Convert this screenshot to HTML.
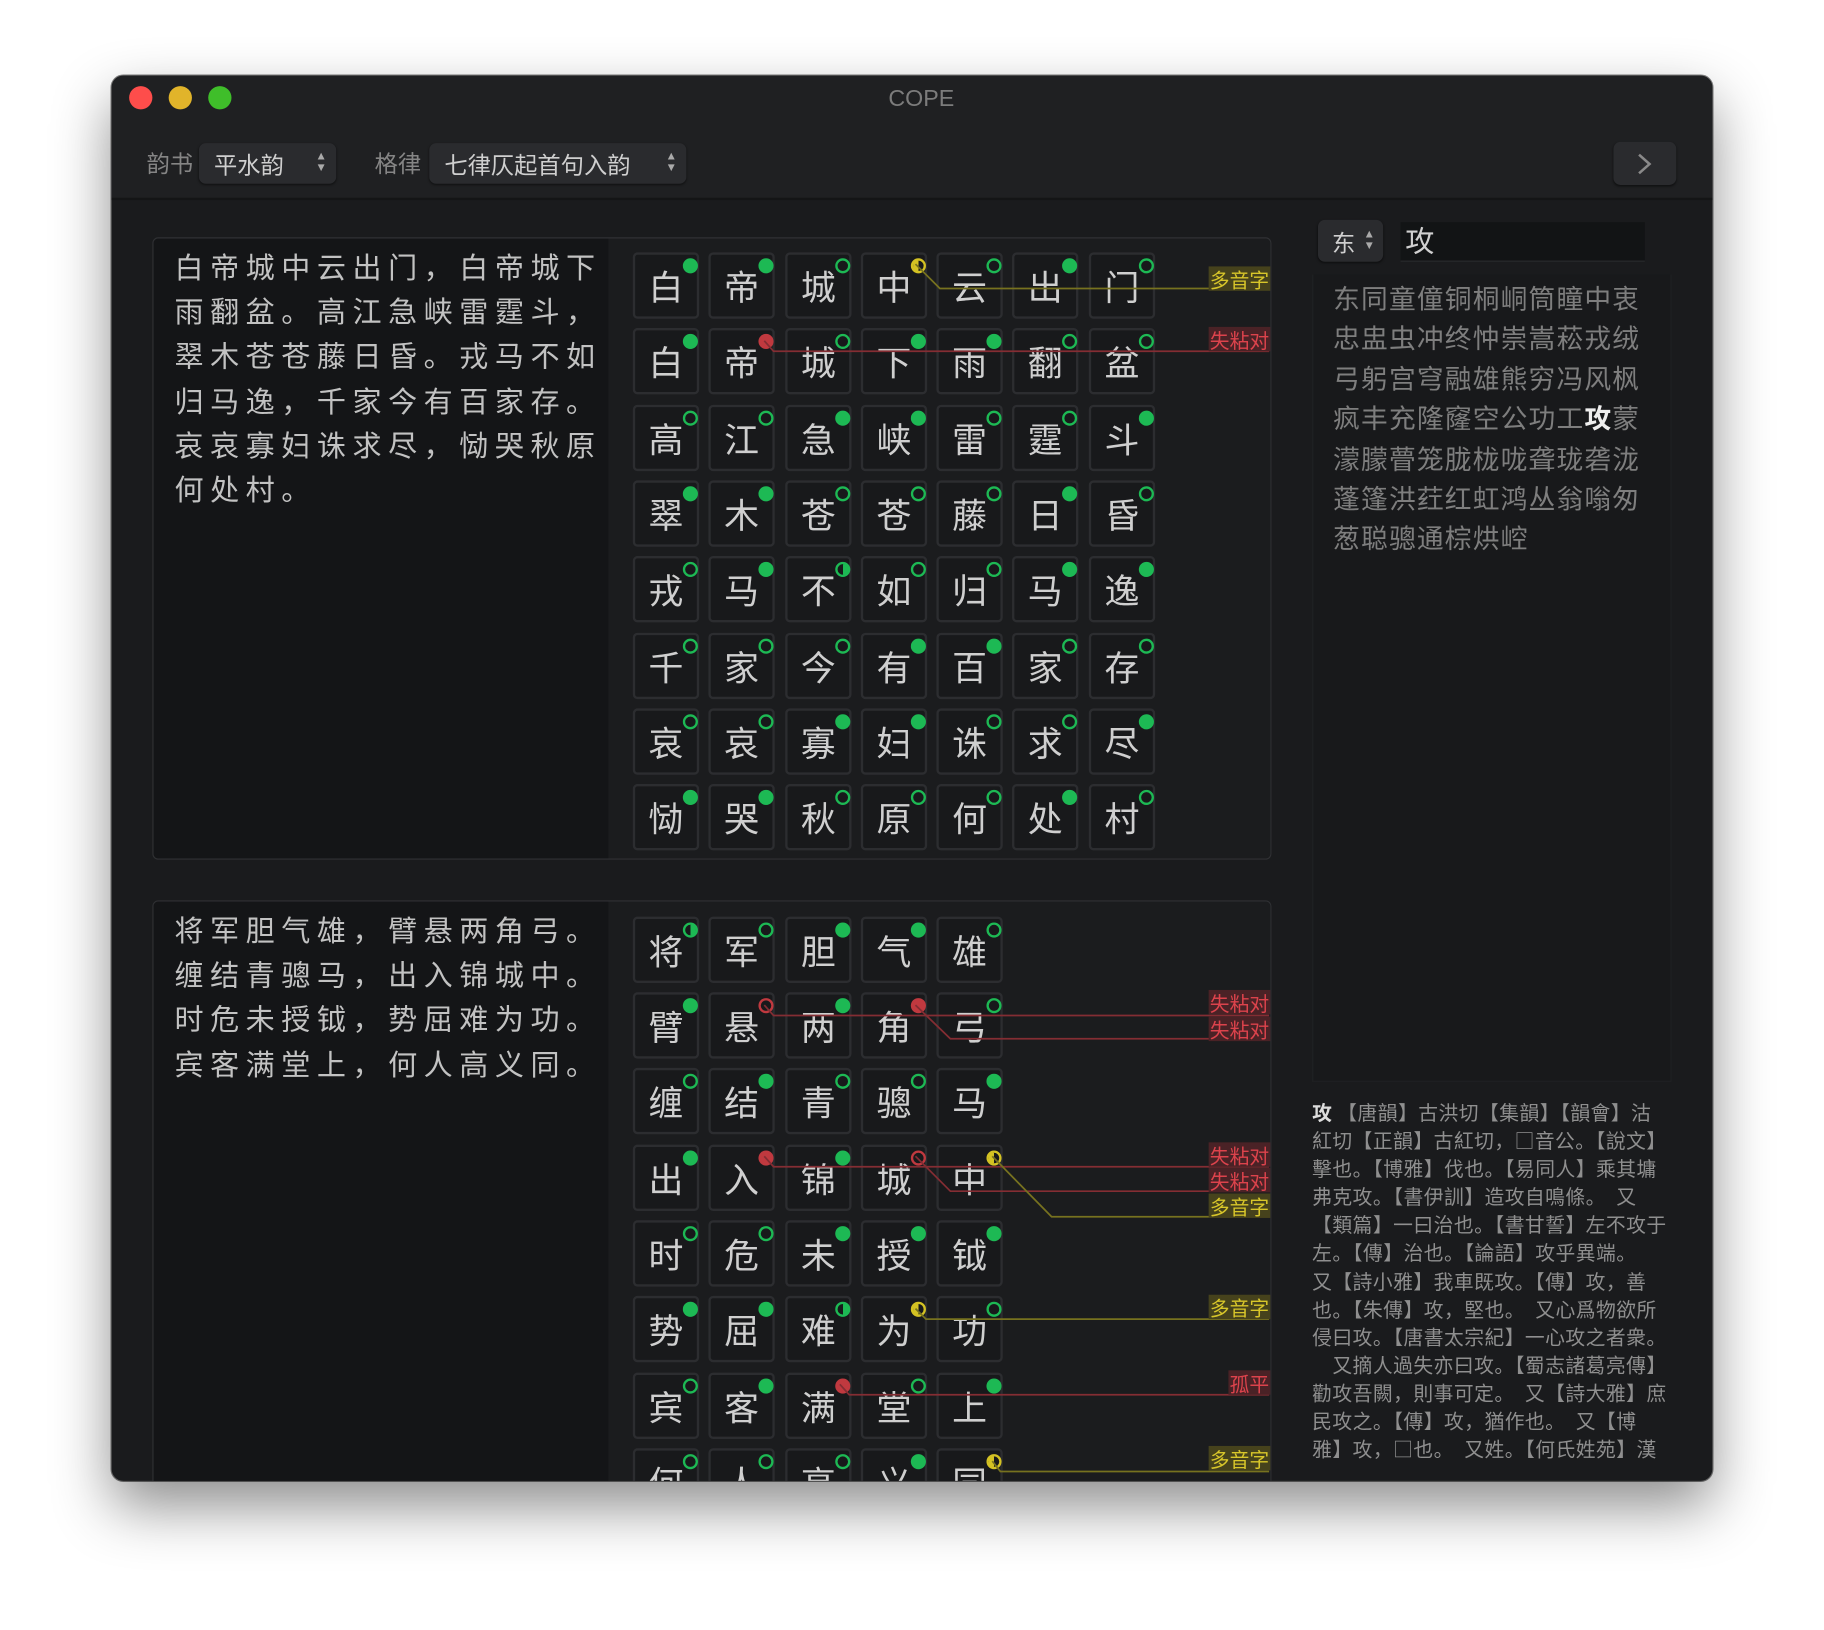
<!DOCTYPE html>
<html><head><meta charset="utf-8"><style>
*{margin:0;padding:0;box-sizing:border-box}
html,body{width:1824px;height:1630px;overflow:hidden;background:#fff}
body{font-family:"Liberation Sans","Noto Sans CJK SC",sans-serif}
#s{position:absolute;left:0;top:0;width:1568px;height:1401px;transform:scale(1.16327);transform-origin:0 0}
.win{position:absolute;left:96px;top:65px;width:1376px;height:1208px;border-radius:10px;background:#1a1b1d;overflow:hidden;box-shadow:0 22px 50px rgba(0,0,0,.45),0 0 0 1px rgba(0,0,0,.5)}
.a{position:absolute}
.tb{left:0;top:0;width:1376px;height:107px;background:#1f2022;border-bottom:2px solid #141516}
.tl{width:20px;height:20px;border-radius:50%;top:9px}
.lbl{color:#858585;font-size:20px}
.pop{background:#2a2b2e;border-radius:6px;color:#cfcfcf;font-size:20px;box-shadow:0 1px 2px rgba(0,0,0,.5)}
.arr{color:#aaa;font-size:10px;line-height:10px;text-align:center}
.pan{border:1px solid #303134;border-radius:5px;overflow:hidden}
.txt{background:#141517;color:#c2c2c2;font-size:25px;letter-spacing:5.6px;line-height:38.2px;padding:7px 0 0 18px;white-space:nowrap}
.c{position:absolute;width:57px;height:57px;border:2px solid #2c2d30;border-radius:4px;background:#18191b;color:#cfcfcf;font-size:30px;line-height:53px;text-align:center;font-family:"Noto Sans CJK SC",sans-serif}
.c i{position:absolute;left:41px;top:3px;width:13px;height:13px;border-radius:50%}
.F{background:#1db954}
.O{border:2px solid #1db954}
.R{background:#c0393f}
.r{border:2px solid #c0393f}
.H{border:2px solid #1db954;background:linear-gradient(90deg,transparent 50%,#1db954 50%)}
.Y{border:2px solid #d4c223;background:linear-gradient(90deg,#d4c223 50%,transparent 50%)}
.tag{position:absolute;right:0;height:21px;font-size:17px;line-height:21px;padding:0 1px;font-family:"Noto Sans CJK SC",sans-serif}
.ty{background:#46421c;color:#d8c62a}
.tr{background:#4a2226;color:#dc434c}
.rl{color:#7e7e7e;font-size:23px;letter-spacing:1px;line-height:34.4px;white-space:nowrap}
.def{color:#8f8f8f;font-size:17px;letter-spacing:0.4px;line-height:24.1px;white-space:nowrap;font-family:"Noto Sans CJK SC",sans-serif}
</style></head><body><div id="s">
<div class="win">
<div class="a tb"></div>
<div class="a tl" style="left:15px;background:#fe4d4b"></div>
<div class="a tl" style="left:49px;background:#e1b42a"></div>
<div class="a tl" style="left:83px;background:#3fbe2a"></div>
<div class="a" style="left:8px;width:1376px;top:9px;text-align:center;color:#7c7c7c;font-size:20px">COPE</div>

<div class="a lbl" style="left:30px;top:60px">韵书</div>
<div class="a pop" style="left:75px;top:58px;width:118px;height:35px"><span class="a" style="left:13px;top:3px">平水韵</span><div class="a arr" style="right:8px;top:7px">▲<br>▼</div></div>
<div class="a lbl" style="left:226px;top:60px">格律</div>
<div class="a pop" style="left:273px;top:58px;width:221px;height:35px"><span class="a" style="left:13px;top:3px">七律仄起首句入韵</span><div class="a arr" style="right:8px;top:7px">▲<br>▼</div></div>
<div class="a pop" style="left:1291px;top:57px;width:54px;height:37px"><svg class="a" style="left:18px;top:9px" width="18" height="20"><path d="M4 2 L13 10 L4 18" stroke="#8a8a8a" stroke-width="2.2" fill="none"/></svg></div>

<div class="a pan" style="left:35px;top:139px;width:962px;height:535px">
<div class="a txt" style="left:0;top:0;width:391px;height:535px">白帝城中云出门，白帝城下<br>雨翻盆。高江急峡雷霆斗，<br>翠木苍苍藤日昏。戎马不如<br>归马逸，千家今有百家存。<br>哀哀寡妇诛求尽，恸哭秋原<br>何处村。</div>
<div class="a" style="left:391px;top:0;width:571px;height:535px;background:#1b1c1e"></div>
</div>
<div class="a pan" style="left:35px;top:709px;width:962px;height:560px">
<div class="a txt" style="left:0;top:0;width:391px;height:560px">将军胆气雄，臂悬两角弓。<br>缠结青骢马，出入锦城中。<br>时危未授钺，势屈难为功。<br>宾客满堂上，何人高义同。</div>
<div class="a" style="left:391px;top:0;width:571px;height:560px;background:#1b1c1e"></div>
</div>

<div class="a" style="left:-96px;top:-65px;width:1568px;height:1401px">

<div class="c" style="left:544px;top:217px">白<i class="F"></i></div><div class="c" style="left:609px;top:217px">帝<i class="F"></i></div><div class="c" style="left:675px;top:217px">城<i class="O"></i></div><div class="c" style="left:740px;top:217px">中<i class="Y"></i></div><div class="c" style="left:805px;top:217px">云<i class="O"></i></div><div class="c" style="left:870px;top:217px">出<i class="F"></i></div><div class="c" style="left:936px;top:217px">门<i class="O"></i></div>
<div class="c" style="left:544px;top:282px">白<i class="F"></i></div><div class="c" style="left:609px;top:282px">帝<i class="R"></i></div><div class="c" style="left:675px;top:282px">城<i class="O"></i></div><div class="c" style="left:740px;top:282px">下<i class="F"></i></div><div class="c" style="left:805px;top:282px">雨<i class="F"></i></div><div class="c" style="left:870px;top:282px">翻<i class="O"></i></div><div class="c" style="left:936px;top:282px">盆<i class="O"></i></div>
<div class="c" style="left:544px;top:348px">高<i class="O"></i></div><div class="c" style="left:609px;top:348px">江<i class="O"></i></div><div class="c" style="left:675px;top:348px">急<i class="F"></i></div><div class="c" style="left:740px;top:348px">峡<i class="F"></i></div><div class="c" style="left:805px;top:348px">雷<i class="O"></i></div><div class="c" style="left:870px;top:348px">霆<i class="O"></i></div><div class="c" style="left:936px;top:348px">斗<i class="F"></i></div>
<div class="c" style="left:544px;top:413px">翠<i class="F"></i></div><div class="c" style="left:609px;top:413px">木<i class="F"></i></div><div class="c" style="left:675px;top:413px">苍<i class="O"></i></div><div class="c" style="left:740px;top:413px">苍<i class="O"></i></div><div class="c" style="left:805px;top:413px">藤<i class="O"></i></div><div class="c" style="left:870px;top:413px">日<i class="F"></i></div><div class="c" style="left:936px;top:413px">昏<i class="O"></i></div>
<div class="c" style="left:544px;top:478px">戎<i class="O"></i></div><div class="c" style="left:609px;top:478px">马<i class="F"></i></div><div class="c" style="left:675px;top:478px">不<i class="H"></i></div><div class="c" style="left:740px;top:478px">如<i class="O"></i></div><div class="c" style="left:805px;top:478px">归<i class="O"></i></div><div class="c" style="left:870px;top:478px">马<i class="F"></i></div><div class="c" style="left:936px;top:478px">逸<i class="F"></i></div>
<div class="c" style="left:544px;top:544px">千<i class="O"></i></div><div class="c" style="left:609px;top:544px">家<i class="O"></i></div><div class="c" style="left:675px;top:544px">今<i class="O"></i></div><div class="c" style="left:740px;top:544px">有<i class="F"></i></div><div class="c" style="left:805px;top:544px">百<i class="F"></i></div><div class="c" style="left:870px;top:544px">家<i class="O"></i></div><div class="c" style="left:936px;top:544px">存<i class="O"></i></div>
<div class="c" style="left:544px;top:609px">哀<i class="O"></i></div><div class="c" style="left:609px;top:609px">哀<i class="O"></i></div><div class="c" style="left:675px;top:609px">寡<i class="F"></i></div><div class="c" style="left:740px;top:609px">妇<i class="F"></i></div><div class="c" style="left:805px;top:609px">诛<i class="O"></i></div><div class="c" style="left:870px;top:609px">求<i class="O"></i></div><div class="c" style="left:936px;top:609px">尽<i class="F"></i></div>
<div class="c" style="left:544px;top:674px">恸<i class="F"></i></div><div class="c" style="left:609px;top:674px">哭<i class="F"></i></div><div class="c" style="left:675px;top:674px">秋<i class="O"></i></div><div class="c" style="left:740px;top:674px">原<i class="O"></i></div><div class="c" style="left:805px;top:674px">何<i class="O"></i></div><div class="c" style="left:870px;top:674px">处<i class="F"></i></div><div class="c" style="left:936px;top:674px">村<i class="O"></i></div>

<div class="c" style="left:544px;top:788px">将<i class="H"></i></div><div class="c" style="left:609px;top:788px">军<i class="O"></i></div><div class="c" style="left:675px;top:788px">胆<i class="F"></i></div><div class="c" style="left:740px;top:788px">气<i class="F"></i></div><div class="c" style="left:805px;top:788px">雄<i class="O"></i></div>
<div class="c" style="left:544px;top:853px">臂<i class="F"></i></div><div class="c" style="left:609px;top:853px">悬<i class="r"></i></div><div class="c" style="left:675px;top:853px">两<i class="F"></i></div><div class="c" style="left:740px;top:853px">角<i class="R"></i></div><div class="c" style="left:805px;top:853px">弓<i class="O"></i></div>
<div class="c" style="left:544px;top:918px">缠<i class="O"></i></div><div class="c" style="left:609px;top:918px">结<i class="F"></i></div><div class="c" style="left:675px;top:918px">青<i class="O"></i></div><div class="c" style="left:740px;top:918px">骢<i class="O"></i></div><div class="c" style="left:805px;top:918px">马<i class="F"></i></div>
<div class="c" style="left:544px;top:984px">出<i class="F"></i></div><div class="c" style="left:609px;top:984px">入<i class="R"></i></div><div class="c" style="left:675px;top:984px">锦<i class="F"></i></div><div class="c" style="left:740px;top:984px">城<i class="r"></i></div><div class="c" style="left:805px;top:984px">中<i class="Y"></i></div>
<div class="c" style="left:544px;top:1049px">时<i class="O"></i></div><div class="c" style="left:609px;top:1049px">危<i class="O"></i></div><div class="c" style="left:675px;top:1049px">未<i class="F"></i></div><div class="c" style="left:740px;top:1049px">授<i class="F"></i></div><div class="c" style="left:805px;top:1049px">钺<i class="F"></i></div>
<div class="c" style="left:544px;top:1114px">势<i class="F"></i></div><div class="c" style="left:609px;top:1114px">屈<i class="F"></i></div><div class="c" style="left:675px;top:1114px">难<i class="H"></i></div><div class="c" style="left:740px;top:1114px">为<i class="Y"></i></div><div class="c" style="left:805px;top:1114px">功<i class="O"></i></div>
<div class="c" style="left:544px;top:1180px">宾<i class="O"></i></div><div class="c" style="left:609px;top:1180px">客<i class="F"></i></div><div class="c" style="left:675px;top:1180px">满<i class="R"></i></div><div class="c" style="left:740px;top:1180px">堂<i class="O"></i></div><div class="c" style="left:805px;top:1180px">上<i class="F"></i></div>
<div class="c" style="left:544px;top:1245px">何<i class="O"></i></div><div class="c" style="left:609px;top:1245px">人<i class="O"></i></div><div class="c" style="left:675px;top:1245px">高<i class="O"></i></div><div class="c" style="left:740px;top:1245px">义<i class="F"></i></div><div class="c" style="left:805px;top:1245px">同<i class="Y"></i></div>

<svg class="a" style="left:0;top:0" width="1568" height="1401">
<g fill="none" stroke-width="1.5">
<polyline points="787,227 808,248 1091,248" stroke="#77721f"/>
<polyline points="657,293 665,302 1091,302" stroke="#842d33"/>
<polyline points="657,864 665,873 1091,873" stroke="#842d33"/>
<polyline points="787,864 817,893 1091,893" stroke="#842d33"/>
<polyline points="657,994 665,1003 1091,1003" stroke="#842d33"/>
<polyline points="787,994 817,1024 1091,1024" stroke="#842d33"/>
<polyline points="853,994 904,1046 1091,1046" stroke="#77721f"/>
<polyline points="787,1125 796,1134 1091,1134" stroke="#77721f"/>
<polyline points="722,1190 730,1199 1091,1199" stroke="#842d33"/>
<polyline points="853,1256 860,1265 1091,1265" stroke="#77721f"/>
</g></svg>
<div class="a" style="left:0;top:0;width:1092px;height:1401px">
<span class="tag ty" style="top:229px">多音字</span>
<span class="tag tr" style="top:281px">失粘对</span>
<span class="tag tr" style="top:851px">失粘对</span>
<span class="tag tr" style="top:874px">失粘对</span>
<span class="tag tr" style="top:982px">失粘对</span>
<span class="tag tr" style="top:1004px">失粘对</span>
<span class="tag ty" style="top:1026px">多音字</span>
<span class="tag ty" style="top:1113px">多音字</span>
<span class="tag tr" style="top:1178px">孤平</span>
<span class="tag ty" style="top:1243px">多音字</span>
</div>

<div class="a pop" style="left:1133px;top:189px;width:56px;height:36px"><span class="a" style="left:12px;top:4px">东</span><div class="a arr" style="right:7px;top:8px">▲<br>▼</div></div>
<div class="a" style="left:1204px;top:191px;width:210px;height:34px;background:#121415;border-bottom:1px solid #2a2b2d;color:#d0d0d0;font-size:25px;line-height:34px;padding-left:4px">攻</div>
<div class="a" style="left:1128px;top:236px;width:309px;height:694px;border:1px solid #202123;border-top:none;background:#18191b"></div>
<div class="a rl" style="left:1146px;top:240px">东同童僮铜桐峒筒瞳中衷<br>忠盅虫冲终忡崇嵩菘戎绒<br>弓躬宫穹融雄熊穷冯风枫<br>疯丰充隆窿空公功工<b style="color:#eee">攻</b>蒙<br>濛朦瞢笼胧栊咙聋珑砻泷<br>蓬篷洪荭红虹鸿丛翁嗡匆<br>葱聪骢通棕烘崆</div>
<div class="a def" style="left:1128px;top:944px"><b style="color:#ddd">攻</b> 【唐韻】古洪切【集韻】【韻會】沽<br>紅切【正韻】古紅切，□音公。【說文】<br>擊也。【博雅】伐也。【易同人】乘其墉<br>弗克攻。【書伊訓】造攻自鳴條。　又<br>【類篇】一曰治也。【書甘誓】左不攻于<br>左。【傳】治也。【論語】攻乎異端。<br>又【詩小雅】我車既攻。【傳】攻，善<br>也。【朱傳】攻，堅也。　又心爲物欲所<br>侵曰攻。【唐書太宗紀】一心攻之者衆。<br>　又摘人過失亦曰攻。【蜀志諸葛亮傳】<br>勸攻吾闕，則事可定。　又【詩大雅】庶<br>民攻之。【傳】攻，猶作也。　又【博<br>雅】攻，□也。　又姓。【何氏姓苑】漢</div>
</div>
</div>
</div></body></html>
